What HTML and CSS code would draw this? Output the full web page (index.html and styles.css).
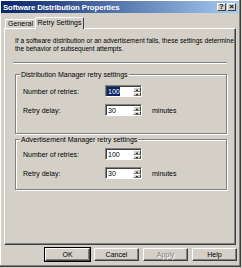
FILE: index.html
```html
<!DOCTYPE html>
<html>
<head>
<meta charset="utf-8">
<link rel="stylesheet" href="styles.css">
</head>
<body>
<div class="window">
  <div class="titlebar">
    <span class="title">Software Distribution Properties</span>
    <div class="tbtns">
      <span class="tbtn">?</span>
      <span class="tbtn x">&#215;</span>
    </div>
  </div>
  <div class="tabs">
    <span class="tab">General</span>
    <span class="tab active">Retry Settings</span>
  </div>
  <div class="panel">
    <p class="intro">If a software distribution or an advertisement fails, these settings determine<br>the behavior of subsequent attempts.</p>
    <div class="sep"></div>
    <div class="group g1">
      <span class="legend">Distribution Manager retry settings</span>
      <div class="row">
        <span class="lbl">Number of retries:</span>
        <div class="spin"><span class="val sel">100</span><div class="arrows"><span class="up"></span><span class="dn"></span></div></div>
      </div>
      <div class="row">
        <span class="lbl">Retry delay:</span>
        <div class="spin"><span class="val">30</span><div class="arrows"><span class="up"></span><span class="dn"></span></div></div>
        <span class="unit">minutes</span>
      </div>
    </div>
    <div class="group g2">
      <span class="legend">Advertisement Manager retry settings</span>
      <div class="row">
        <span class="lbl">Number of retries:</span>
        <div class="spin"><span class="val">100</span><div class="arrows"><span class="up"></span><span class="dn"></span></div></div>
      </div>
      <div class="row">
        <span class="lbl">Retry delay:</span>
        <div class="spin"><span class="val">30</span><div class="arrows"><span class="up"></span><span class="dn"></span></div></div>
        <span class="unit">minutes</span>
      </div>
    </div>
  </div>
  <div class="buttons">
    <span class="btn default">OK</span>
    <span class="btn">Cancel</span>
    <span class="btn disabled">Apply</span>
    <span class="btn">Help</span>
  </div>
</div>
</body>
</html>
```
FILE: styles.css
```css
html, body {
  margin: 0;
  padding: 0;
  background: #d4d0c8;
}
body {
  width: 242px;
  height: 268px;
  overflow: hidden;
  font-family: "Liberation Sans", Arial, sans-serif;
  font-size: 7px;
  color: #000;
}
.window {
  box-sizing: border-box;
  width: 241px;
  height: 267px;
  background: #d4d0c8;
  border-right: 1px solid #404040;
  border-bottom: 1px solid #404040;
  box-shadow: inset -1px -1px 0 #808080, inset 1px 1px 0 #ffffff;
  padding: 1px 2px 0 1px;
  display: flex;
  flex-direction: column;
}
.titlebar {
  height: 12px;
  background: linear-gradient(to right, #0a246a, #a6caf0);
  display: flex;
  align-items: center;
  justify-content: space-between;
  padding: 0 2px 0 2px;
}
.title {
  color: #fff;
  font-weight: bold;
  font-size: 7.8px;
  letter-spacing: -0.1px;
  white-space: nowrap;
}
.tbtns {
  display: flex;
}
.tbtn {
  box-sizing: border-box;
  width: 9px;
  height: 8px;
  background: #d4d0c8;
  border-top: 1px solid #fff;
  border-left: 1px solid #fff;
  border-right: 1px solid #404040;
  border-bottom: 1px solid #404040;
  font-size: 7px;
  font-weight: bold;
  line-height: 6px;
  text-align: center;
  color: #000;
}
.tbtn.x { margin-left: 1px; font-size: 8px; }
.tabs {
  display: flex;
  align-items: flex-end;
  padding: 4px 0 0 4px;
  height: 11px;
  position: relative;
  z-index: 1;
}
.tab {
  box-sizing: border-box;
  height: 9px;
  border-top: 1px solid #fff;
  border-left: 1px solid #fff;
  border-right: 1px solid #404040;
  border-radius: 1px 1px 0 0;
  line-height: 8px;
  width: 31px;
  text-align: center;
  white-space: nowrap;
}
.tab.active {
  height: 12px;
  margin-bottom: -1px;
  background: #d4d0c8;
  width: 49px;
  margin-left: -1px;
  line-height: 10px;
}
.panel {
  box-sizing: border-box;
  margin-left: 3px;
  width: 232px;
  height: 217px;
  border-top: 1px solid #fff;
  border-left: 1px solid #fff;
  border-right: 1px solid #404040;
  border-bottom: 1px solid #404040;
  box-shadow: inset -1px -1px 0 #808080;
  padding: 8px 8px 0 10px;
}
.intro {
  margin: 0;
  line-height: 8px;
  font-size: 6.6px;
  white-space: nowrap;
}
.sep {
  height: 0;
  border-top: 1px solid #808080;
  border-bottom: 1px solid #fff;
  margin: 9px 0 0 -2px;
  width: 214px;
}
.group {
  position: relative;
  box-sizing: border-box;
  width: 212px;
  border: 1px solid #808080;
  box-shadow: 1px 1px 0 #fff, inset 1px 1px 0 #fff;
  padding: 10px 0 0 7px;
}
.g1 { margin-top: 10px; height: 60px; }
.g2 { margin-top: 5px; height: 51px; padding-top: 8px; }
.legend {
  position: absolute;
  left: 4px;
  top: -5px;
  padding: 0 1px;
  background: #d4d0c8;
  line-height: 9px;
  white-space: nowrap;
}
.row {
  display: flex;
  align-items: center;
  height: 12px;
  margin-bottom: 7px;
}
.lbl {
  width: 82px;
}
.spin {
  box-sizing: border-box;
  width: 37px;
  height: 12px;
  background: #fff;
  border-top: 1px solid #808080;
  border-left: 1px solid #808080;
  border-right: 1px solid #fff;
  border-bottom: 1px solid #fff;
  box-shadow: inset 1px 1px 0 #404040;
  display: flex;
  justify-content: space-between;
  align-items: stretch;
  padding: 1px 0 0 1px;
}
.val {
  line-height: 9px;
  padding-left: 1px;
  align-self: flex-start;
}
.val.sel {
  background: #0a246a;
  color: #fff;
}
.arrows {
  width: 8px;
  display: flex;
  flex-direction: column;
}
.arrows span {
  flex: 1;
  box-sizing: border-box;
  background: #d4d0c8;
  border-top: 1px solid #fff;
  border-left: 1px solid #fff;
  border-right: 1px solid #404040;
  border-bottom: 1px solid #808080;
  position: relative;
}
.arrows .up::after, .arrows .dn::after {
  content: "";
  position: absolute;
  left: 2px;
  top: 1px;
  border-left: 1.5px solid transparent;
  border-right: 1.5px solid transparent;
}
.arrows .up::after { border-bottom: 2px solid #000; }
.arrows .dn::after { border-top: 2px solid #000; }
.unit {
  margin-left: 10px;
}
.buttons {
  display: flex;
  justify-content: flex-end;
  gap: 4px;
  margin-top: 3px;
  padding-right: 1px;
}
.btn {
  box-sizing: border-box;
  width: 45px;
  height: 13px;
  border-top: 1px solid #fff;
  border-left: 1px solid #fff;
  border-right: 1px solid #404040;
  border-bottom: 1px solid #404040;
  box-shadow: inset -1px -1px 0 #808080;
  text-align: center;
  line-height: 11px;
  font-size: 7px;
}
.btn.default {
  outline: 1px solid #000;
  outline-offset: 0;
}
.btn.disabled {
  color: #808080;
  text-shadow: 1px 1px 0 #fff;
}
```
